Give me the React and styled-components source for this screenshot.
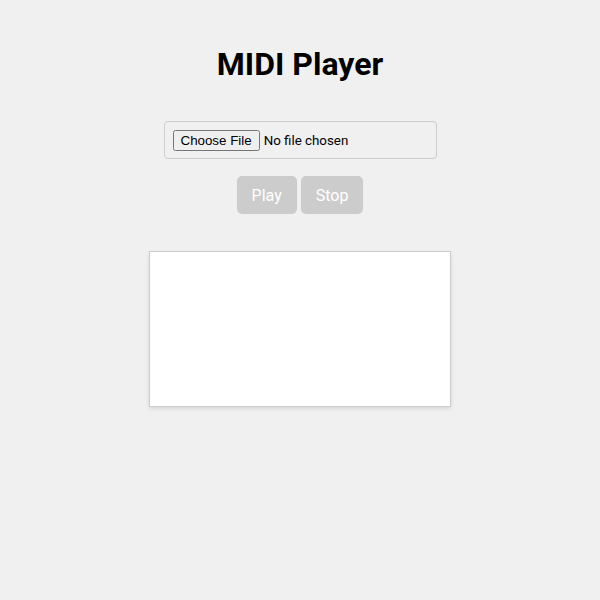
import React from 'react'
import styled, { createGlobalStyle } from 'styled-components'

const GlobalStyle = createGlobalStyle`
  html, body {
    margin: 0;
    padding: 0;
    background: #f0f0f0;
    font-family: Roboto, "Liberation Sans", Arial, sans-serif;
  }
`

const Page = styled.div`
  display: flex;
  flex-direction: column;
  align-items: center;
  padding-top: 46px;
  min-height: 600px;
  box-sizing: border-box;
`

const Title = styled.h1`
  margin: 0 0 38px;
  font-size: 32px;
  line-height: 37px;
  font-weight: 700;
  color: #000;
`

const FileInput = styled.input`
  box-sizing: border-box;
  width: 273px;
  height: 38px;
  padding: 8px;
  border: 1px solid #ccc;
  border-radius: 4px;
  font-family: Roboto, "Liberation Sans", Arial, sans-serif;
  font-size: 13.33px;
  color: #000;
  background: transparent;
`

const Controls = styled.div`
  display: flex;
  gap: 4px;
  margin-top: 17px;
`

const ControlButton = styled.button`
  height: 38px;
  padding: 0 15px;
  border: none;
  border-radius: 5px;
  background: #cccccc;
  color: #fff;
  font-family: Roboto, "Liberation Sans", Arial, sans-serif;
  font-size: 16px;
  cursor: not-allowed;
`

const Screen = styled.canvas`
  display: block;
  margin-top: 37px;
  width: 300px;
  height: 154px;
  background: #fff;
  border: 1px solid #ccc;
  box-shadow: 0 2px 4px rgba(0, 0, 0, 0.1);
`

export default function App() {
  return (
    <>
      <GlobalStyle />
      <Page>
        <Title>MIDI Player</Title>
        <FileInput type="file" accept=".mid,.midi" />
        <Controls>
          <ControlButton disabled>Play</ControlButton>
          <ControlButton disabled>Stop</ControlButton>
        </Controls>
        <Screen width={300} height={154} />
      </Page>
    </>
  )
}
